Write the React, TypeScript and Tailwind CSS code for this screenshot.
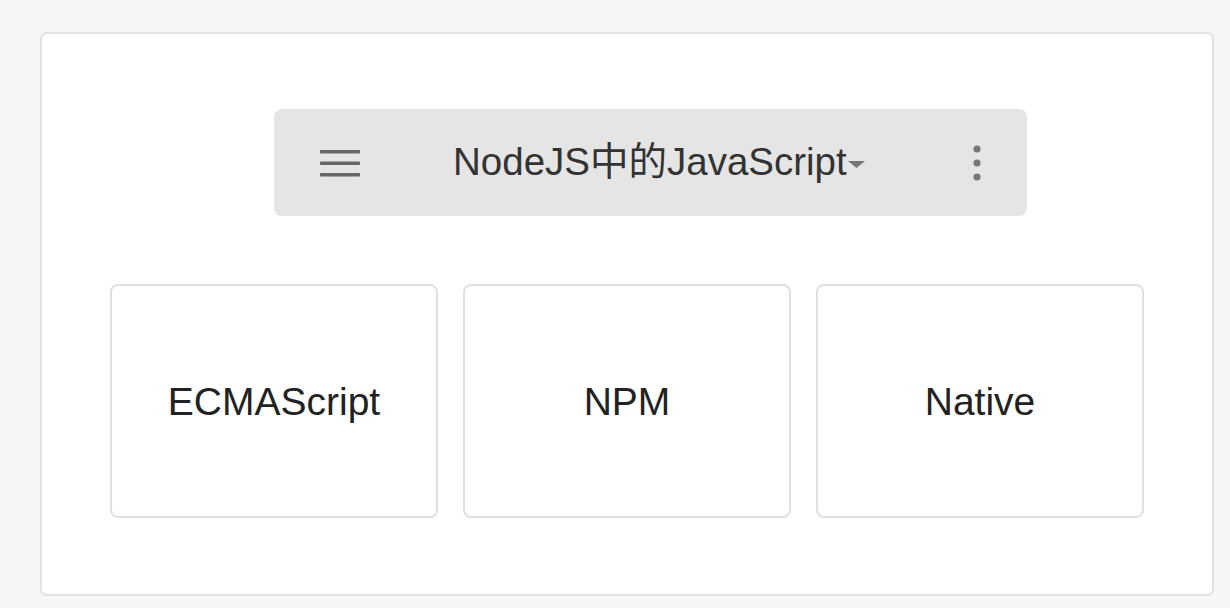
import React from "react";

const font = { fontFamily: '"Liberation Sans", "Noto Sans CJK SC", sans-serif' };

function MenuIcon() {
  return (
    <svg width="40" height="30" viewBox="0 0 40 30" className="shrink-0">
      <rect x="0" y="2" width="40" height="3.5" rx="1" fill="#666" />
      <rect x="0" y="13.5" width="40" height="3.5" rx="1" fill="#666" />
      <rect x="0" y="25" width="40" height="3.5" rx="1" fill="#666" />
    </svg>
  );
}

function DotsIcon() {
  return (
    <svg width="10" height="38" viewBox="0 0 10 38" className="shrink-0">
      <circle cx="5" cy="5" r="3.6" fill="#777" />
      <circle cx="5" cy="19" r="3.6" fill="#777" />
      <circle cx="5" cy="33" r="3.6" fill="#777" />
    </svg>
  );
}

function Caret() {
  return (
    <svg width="17" height="7" viewBox="0 0 17 7" className="ml-[1px] mt-[3px] shrink-0">
      <path d="M0 0 L17 0 L8.5 7 Z" fill="#777" />
    </svg>
  );
}

const items = ["ECMAScript", "NPM", "Native"];

export default function App() {
  return (
    <div className="w-[1230px] h-[608px] bg-[#f5f6f8] pt-[32px] pl-[40px] overflow-hidden" style={font}>
      <div className="w-[1174px] h-[564px] bg-white border-2 border-[#e2e2e2] rounded-[7px] pt-[75px]">
        <div className="ml-[232px] w-[753px] h-[107px] bg-[#e5e5e5] rounded-[8px] flex items-center pl-[46px] pr-[45px]">
          <MenuIcon />
          <div className="ml-[93px] flex items-center text-[38.5px] text-[#333] leading-none">
            <span>NodeJS中的JavaScript</span>
            <Caret />
          </div>
          <div className="ml-auto">
            <DotsIcon />
          </div>
        </div>
        <div className="mt-[68px] ml-[68px] flex gap-[25px]">
          {items.map((t) => (
            <div
              key={t}
              className="w-[328px] h-[234px] border-2 border-[#e0e0e0] rounded-[8px] flex items-center justify-center pt-[3px] text-[39px] text-[#222]"
            >
              {t}
            </div>
          ))}
        </div>
      </div>
    </div>
  );
}
